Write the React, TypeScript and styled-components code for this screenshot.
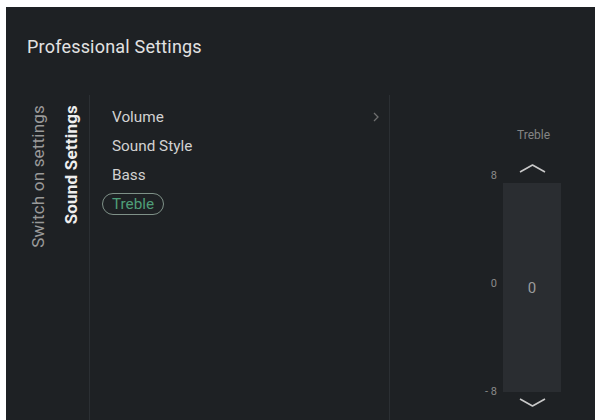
import React from 'react';
import styled, { createGlobalStyle } from 'styled-components';

const GlobalStyle = createGlobalStyle`
  html, body {
    margin: 0;
    padding: 0;
    background: #ffffff;
  }
  body {
    font-family: Roboto, "Liberation Sans", Arial, sans-serif;
  }
`;

const Screen = styled.div`
  margin: 7px 0 0 6px;
  width: 589px;
  height: 413px;
  background: #1e2124;
  display: flex;
  flex-direction: column;
  overflow: hidden;
`;

const Header = styled.div`
  height: 88px;
  box-sizing: border-box;
  padding: 29px 0 0 21px;
  flex: 0 0 auto;
`;

const Title = styled.h1`
  margin: 0;
  font-size: 18px;
  line-height: 22px;
  font-weight: 400;
  color: #e2e2e2;
  letter-spacing: 0.2px;
`;

const Body = styled.div`
  flex: 1 1 auto;
  display: flex;
`;

const SideTabs = styled.div`
  width: 83px;
  box-sizing: border-box;
  padding: 10px 0 0 22px;
  display: flex;
  align-items: flex-start;
  gap: 13px;
`;

const VerticalTab = styled.div<{ active?: boolean }>`
  writing-mode: vertical-rl;
  transform: rotate(180deg);
  font-size: 17px;
  line-height: 20px;
  letter-spacing: 0.2px;
  white-space: nowrap;
  font-weight: ${(p) => (p.active ? 700 : 400)};
  color: ${(p) => (p.active ? '#eeeeee' : '#9a9a9a')};
`;

const Menu = styled.div`
  width: 300px;
  box-sizing: border-box;
  border-left: 1px solid #2b2f33;
  padding: 7px 10px 0 12px;
  display: flex;
  flex-direction: column;
`;

const MenuRow = styled.div`
  height: 29px;
  display: flex;
  align-items: center;
  justify-content: space-between;
`;

const ItemLabel = styled.span<{ selected?: boolean }>`
  font-size: 15.3px;
  line-height: 18px;
  padding: 1px 9px;
  border-radius: 12px;
  border: 1.5px solid ${(p) => (p.selected ? '#7f9188' : 'transparent')};
  color: ${(p) => (p.selected ? '#4f9e78' : '#d2d2d2')};
`;

const RightPane = styled.div`
  flex: 1 1 auto;
  border-left: 1px solid #2b2f33;
  display: grid;
  grid-template-columns: 113px 58px 1fr;
  grid-template-rows: auto auto auto auto;
  align-content: start;
`;

const SliderLabel = styled.div`
  grid-column: 2;
  padding: 33px 0 0 3px;
  height: 14px;
  font-size: 12px;
  line-height: 14px;
  text-align: center;
  color: #858585;
`;

const ChevronCell = styled.div<{ top: number }>`
  grid-column: 2;
  margin-top: ${(p) => p.top}px;
  height: 16px;
  display: flex;
  align-items: center;
  justify-content: center;
`;

const Scale = styled.div`
  grid-column: 1;
  margin: -7px 0;
  padding-right: 6px;
  display: flex;
  flex-direction: column;
  justify-content: space-between;
  align-items: flex-end;
`;

const ScaleMark = styled.span`
  font-size: 11px;
  line-height: 14px;
  color: #8a8a8a;
  white-space: pre;
`;

const Bar = styled.div`
  grid-column: 2;
  margin-top: 7px;
  height: 209px;
  background: #2a2d31;
  display: flex;
  align-items: center;
  justify-content: center;
`;

const BarValue = styled.span`
  font-size: 15px;
  color: #9c9c9c;
`;

const Caret = ({ up }: { up?: boolean }) => (
  <svg width="27" height="10" viewBox="0 0 27 10">
    <polyline
      points={up ? '1,9 13.5,2 26,9' : '1,1 13.5,8 26,1'}
      fill="none"
      stroke="#c9c9c9"
      strokeWidth="1.6"
      strokeLinejoin="round"
    />
  </svg>
);

const SmallChevron = () => (
  <svg width="6" height="10" viewBox="0 0 6 10">
    <polyline points="1,1 5,5 1,9" fill="none" stroke="#6f6f6f" strokeWidth="1.3" />
  </svg>
);

const items = [
  { label: 'Volume', arrow: true },
  { label: 'Sound Style' },
  { label: 'Bass' },
  { label: 'Treble', selected: true },
];

export default function App() {
  return (
    <>
      <GlobalStyle />
      <Screen>
        <Header>
          <Title>Professional Settings</Title>
        </Header>
        <Body>
          <SideTabs>
            <VerticalTab>Switch on settings</VerticalTab>
            <VerticalTab active>Sound Settings</VerticalTab>
          </SideTabs>
          <Menu>
            {items.map((it) => (
              <MenuRow key={it.label}>
                <ItemLabel selected={it.selected}>{it.label}</ItemLabel>
                {it.arrow && <SmallChevron />}
              </MenuRow>
            ))}
          </Menu>
          <RightPane>
            <SliderLabel>Treble</SliderLabel>
            <ChevronCell top={18}>
              <Caret up />
            </ChevronCell>
            <Scale style={{ gridRow: 3 }}>
              <ScaleMark>8</ScaleMark>
              <ScaleMark>0</ScaleMark>
              <ScaleMark>- 8</ScaleMark>
            </Scale>
            <Bar style={{ gridRow: 3 }}>
              <BarValue>0</BarValue>
            </Bar>
            <ChevronCell top={3}>
              <Caret />
            </ChevronCell>
          </RightPane>
        </Body>
      </Screen>
    </>
  );
}
